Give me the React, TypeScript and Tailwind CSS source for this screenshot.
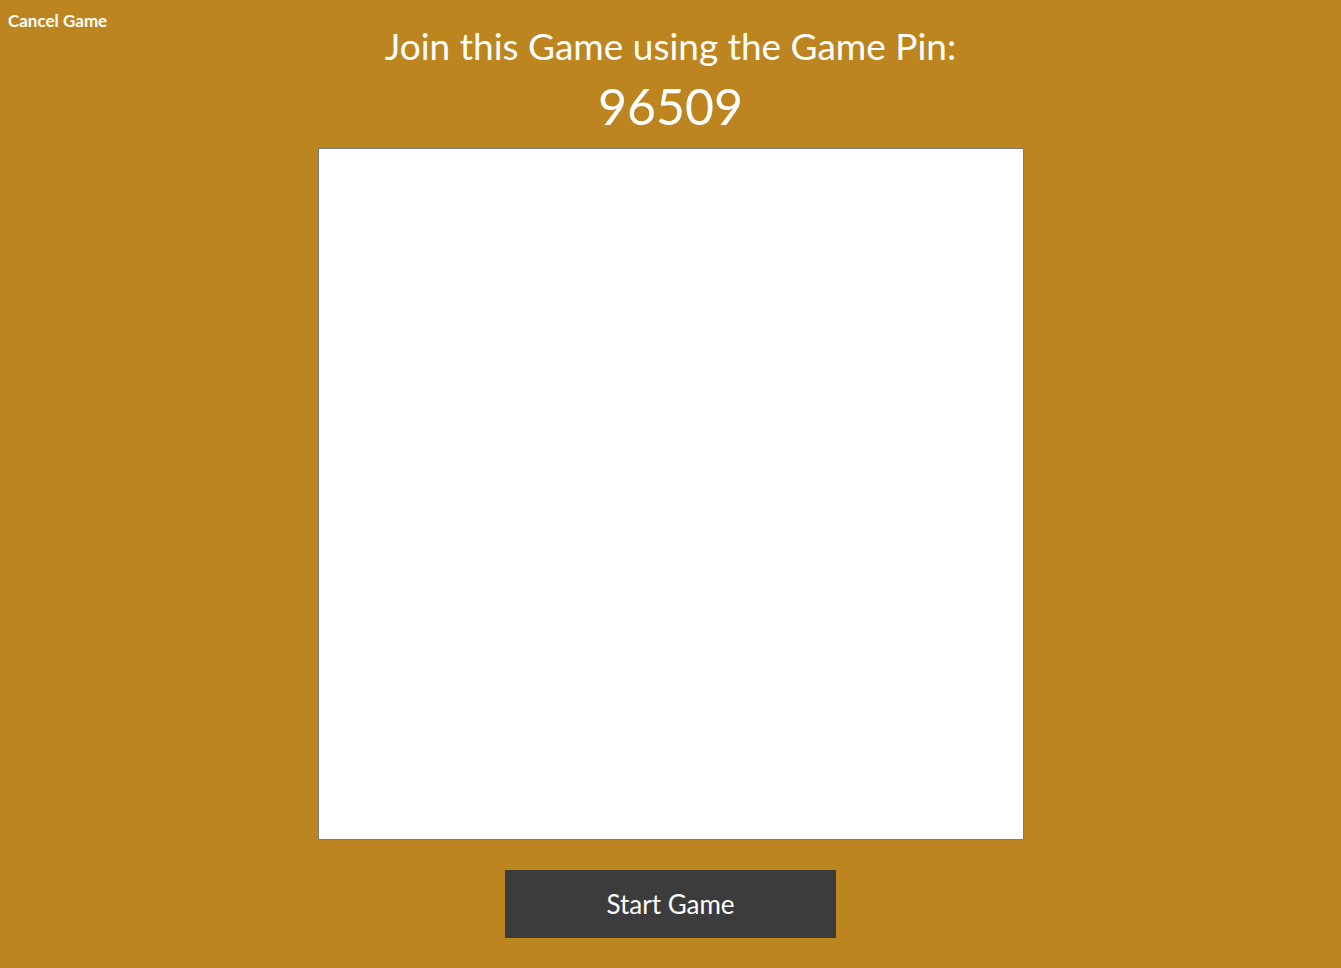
export default function App() {
  return (
    <div
      className="relative min-h-screen w-full bg-[#bc8520] text-white"
      style={{ fontFamily: '"Lato", "Noto Sans", sans-serif' }}
    >
      <button className="absolute left-2 top-[8px] text-[17px] font-bold text-white">
        Cancel Game
      </button>

      <div className="flex flex-col items-center pt-[24px]">
        <h1 className="text-[37px] leading-[44px] font-normal">Join this Game using the Game Pin:</h1>
        <div className="text-[50px] leading-[68px] mt-[4px]">96509</div>

        <div className="mt-[8px] w-[706px] h-[692px] bg-white border border-[#7a7a7a]"></div>

        <button className="mt-[30px] w-[331px] h-[68px] bg-[#3c3c3c] text-[26px] text-white">
          Start Game
        </button>
      </div>
    </div>
  );
}
